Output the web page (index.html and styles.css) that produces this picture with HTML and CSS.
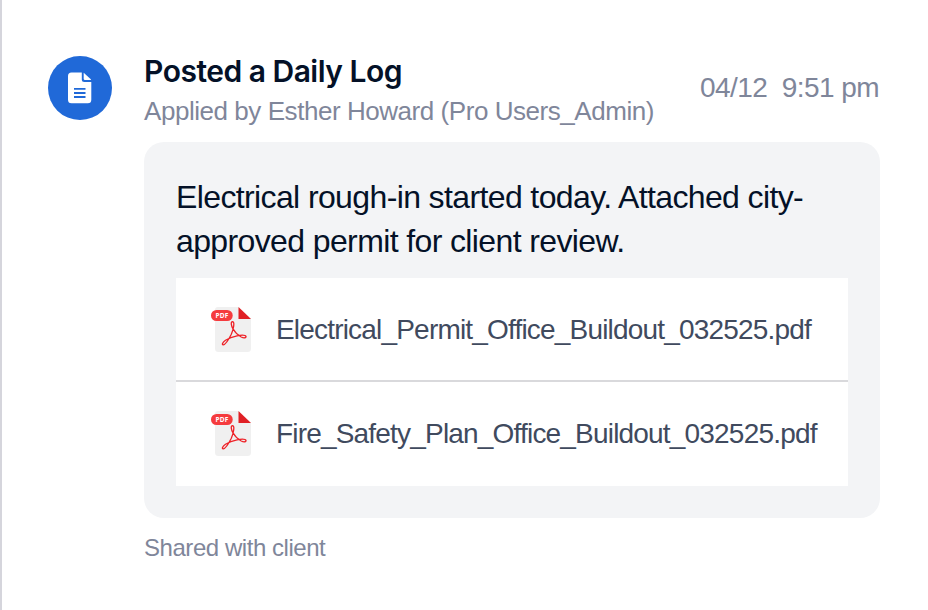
FILE: index.html
```html
<!DOCTYPE html>
<html lang="en">
<head>
<meta charset="utf-8">
<title>Daily Log</title>
<link rel="stylesheet" href="styles.css">
</head>
<body>
<svg class="defs" aria-hidden="true">
  <symbol id="pdf" viewBox="0 0 40 46">
    <path d="M6 1H27L40 13V42.500Q40 46 36.500 46H7.500Q4 46 4 42.500V4Q4 1 7 1Z" fill="#f0f0f0"/>
    <path d="M27.500 1L40 13H27.500Z" fill="#e02025"/>
    <rect x="0" y="4" width="21.700" height="11" rx="5.500" fill="#f53b3e"/>
    <path d="M21.600 15.600C19.400 15.700 20.200 20 22 22.800C23.600 25.700 26.500 29 30.200 31C33.200 32.500 35.300 31.700 35 30.500C34.600 29 30.500 29 26 29.800C21.500 30.600 17.500 32.300 14.500 34.300C11.200 36.500 10.600 39 12.300 38.800C14.700 38.500 18 33 20.300 28.300C22.500 23.500 24 15.600 21.600 15.600Z" fill="none" stroke="#ee2228" stroke-width="1.300"/>
  </symbol>
</svg>
<main class="entry">
  <div class="avatar">
    <svg class="doc" viewBox="0 0 24 32">
      <path d="M3.500 .5H13.800V7.500Q13.800 10 16.300 10H23.300V27.800Q23.300 31.300 19.800 31.300H3.500Q0 31.300 0 27.800V4Q0 .5 3.500 .5Z" fill="#fff"/>
      <path d="M15.700 .7L22.800 7.300Q23.500 8 22.500 8H17Q15.700 8 15.700 6.700Z" fill="#fff"/>
      <path d="M6 16.900H17.500M6 21H17.500M6 25H17.500" stroke="#2069d8" stroke-width="1.800"/>
    </svg>
  </div>
  <div class="content">
    <header class="head">
      <div class="heading">
        <h1 class="title">Posted a Daily Log</h1>
        <p class="byline">Applied by Esther Howard (Pro Users_Admin)</p>
      </div>
      <time class="time">04/12&nbsp; 9:51 pm</time>
    </header>
    <section class="card">
      <p class="message">Electrical rough-in started today. Attached city-<br>approved permit for client review.</p>
      <ul class="files">
        <li class="file"><span class="icon"><svg class="pdf"><use href="#pdf"/></svg><span class="tag">PDF</span></span><span class="name">Electrical_Permit_Office_Buildout_032525.pdf</span></li>
        <li class="file"><span class="icon"><svg class="pdf"><use href="#pdf"/></svg><span class="tag">PDF</span></span><span class="name">Fire_Safety_Plan_Office_Buildout_032525.pdf</span></li>
      </ul>
    </section>
    <p class="shared">Shared with client</p>
  </div>
</main>
</body>
</html>
```
FILE: styles.css
```css
* { box-sizing: border-box; margin: 0; padding: 0; }
body {
  height: 610px;
  overflow: hidden;
  background: #fff;
  border-left: 2px solid #d5d5dc;
  font-family: "Liberation Sans", Arial, sans-serif;
  color: #7f869a;
}
.defs { position: absolute; width: 0; height: 0; }
.entry { display: flex; gap: 32px; padding: 51px 48px 0 46px; }
.avatar {
  display: flex;
  align-items: center;
  justify-content: center;
  flex: none;
  width: 64px;
  height: 64px;
  margin-top: 5px;
  border-radius: 50%;
  background: #2069d8;
}
.doc { width: 24px; height: 32px; }
.content { width: 736px; }
.head { display: flex; justify-content: space-between; height: 91px; white-space: nowrap; }
.title {
  font: 600 30px/40px Inter, sans-serif;
  letter-spacing: -0.5px;
  color: #041127;
}
.byline { margin-top: 1px; font-size: 26px; line-height: 38px; letter-spacing: -0.45px; }
.time { padding: 19px 1px 0 0; font-size: 28px; line-height: 36px; letter-spacing: -0.55px; }
.card { height: 376px; padding: 33px 32px 32px; border-radius: 20px; background: #f3f4f6; }
.message { font-size: 32px; line-height: 44px; letter-spacing: -0.62px; color: #041127; white-space: nowrap; }
.files { margin-top: 15px; list-style: none; background: #fff; }
.file { display: flex; align-items: flex-start; height: 104px; padding: 28px 0 0 35px; gap: 25px; }
.file:first-child { border-bottom: 2px solid #d9d9dc; }
.icon { position: relative; flex: none; width: 40px; height: 46px; }
.pdf { display: block; width: 40px; height: 46px; }
.tag {
  position: absolute;
  top: 4px;
  left: 0;
  width: 22px;
  font: 700 6.500px/11px "Open Sans", sans-serif;
  letter-spacing: 0.2px;
  text-align: center;
  color: #fff;
}
.name { margin-top: 6px; font-size: 28px; line-height: 36px; letter-spacing: -0.81px; color: #404a5e; white-space: nowrap; }
.shared { margin-top: 14px; font-size: 24px; line-height: 32px; letter-spacing: -0.45px; }
```
